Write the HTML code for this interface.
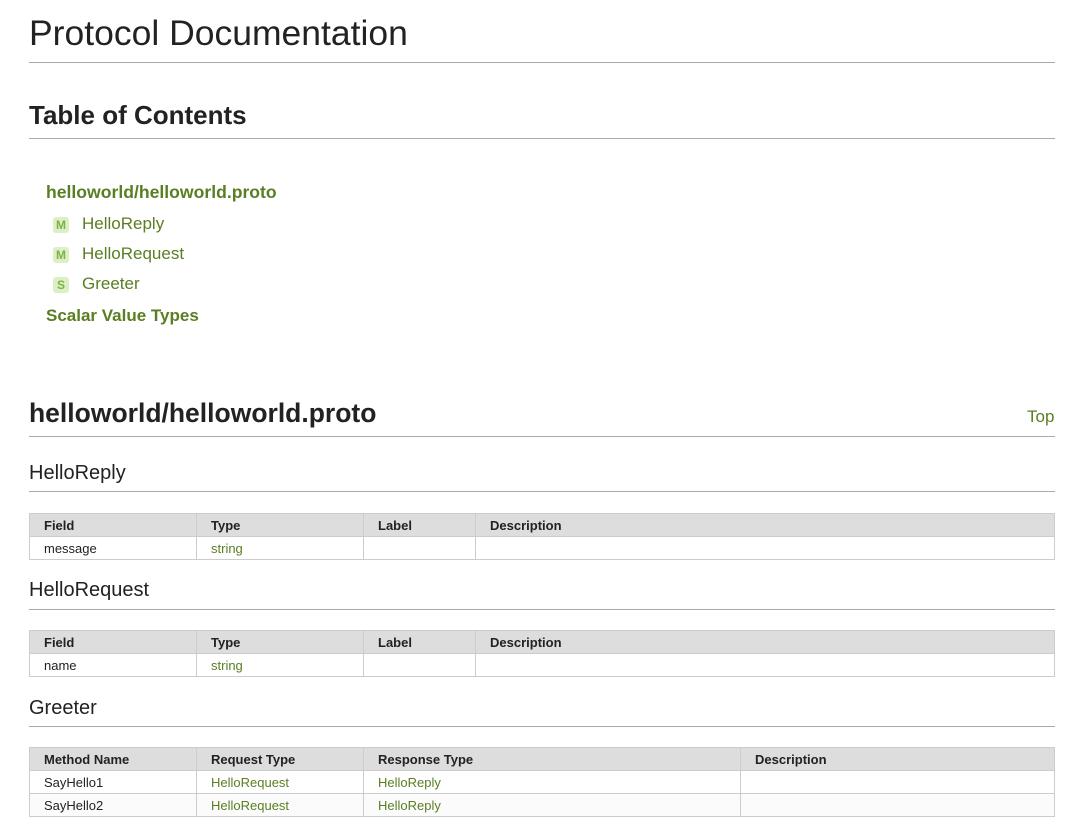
<!DOCTYPE html>
<html><head><meta charset="utf-8"><style>
body{margin:0;width:1080px;height:838px;background:#fff;font-family:"Liberation Sans",sans-serif;color:#222;position:relative;overflow:hidden}
.a{position:absolute;white-space:nowrap}
.hr{position:absolute;left:29px;width:1026px;height:1px;background:#aaa}
.g{color:#5a7e22}
.b{font-weight:bold}
.badge{position:absolute;left:53px;width:16px;height:16px;border-radius:3px;background:#dcefc7;color:#7cb342;font-size:12px;font-weight:bold;text-align:center;line-height:16px}
table{position:absolute;left:29px;width:1026px;border-collapse:collapse;font-size:13px;table-layout:fixed}
td,th{border:1px solid #ccc;height:22px;padding:0 0 0 14px;text-align:left;white-space:nowrap}
th{background:#ddd;font-weight:bold;height:21px;padding-top:1px}
tr.alt td{background:#fcfbfb}
td.g{color:#5a7e22}
</style></head><body>
<div class="a" style="left:29px;top:13px;font-size:35.5px;color:#222">Protocol Documentation</div>
<div class="hr" style="top:62px"></div>
<div class="a b" style="left:29px;top:100px;font-size:26px">Table of Contents</div>
<div class="hr" style="top:138px"></div>

<div class="a b g" style="left:46px;top:182px;font-size:17.6px">helloworld/helloworld.proto</div>
<div class="badge" style="top:217px">M</div><div class="a g" style="left:82px;top:214px;font-size:17px">HelloReply</div>
<div class="badge" style="top:247px">M</div><div class="a g" style="left:82px;top:244px;font-size:17px">HelloRequest</div>
<div class="badge" style="top:277px">S</div><div class="a g" style="left:82px;top:274px;font-size:17px">Greeter</div>
<div class="a b g" style="left:46px;top:306px;font-size:17px">Scalar Value Types</div>

<div class="a b" style="left:29px;top:398px;font-size:26.5px">helloworld/helloworld.proto</div>
<div class="a g" style="left:1027px;top:407px;font-size:17px">Top</div>
<div class="hr" style="top:436px"></div>

<div class="a" style="left:29px;top:462px;font-size:20px">HelloReply</div>
<div class="hr" style="top:491px"></div>
<table style="top:513px"><colgroup><col style="width:167px"><col style="width:167px"><col style="width:112px"><col></colgroup>
<tr><th>Field</th><th>Type</th><th>Label</th><th>Description</th></tr>
<tr><td>message</td><td class="g">string</td><td></td><td></td></tr></table>

<div class="a" style="left:29px;top:579px;font-size:20px">HelloRequest</div>
<div class="hr" style="top:609px"></div>
<table style="top:630px"><colgroup><col style="width:167px"><col style="width:167px"><col style="width:112px"><col></colgroup>
<tr><th>Field</th><th>Type</th><th>Label</th><th>Description</th></tr>
<tr><td>name</td><td class="g">string</td><td></td><td></td></tr></table>

<div class="a" style="left:29px;top:697px;font-size:20px">Greeter</div>
<div class="hr" style="top:726px"></div>
<table style="top:747px"><colgroup><col style="width:167px"><col style="width:167px"><col style="width:377px"><col></colgroup>
<tr><th>Method Name</th><th>Request Type</th><th>Response Type</th><th>Description</th></tr>
<tr><td>SayHello1</td><td class="g">HelloRequest</td><td class="g">HelloReply</td><td></td></tr>
<tr class="alt"><td>SayHello2</td><td class="g">HelloRequest</td><td class="g">HelloReply</td><td></td></tr></table>
</body></html>
